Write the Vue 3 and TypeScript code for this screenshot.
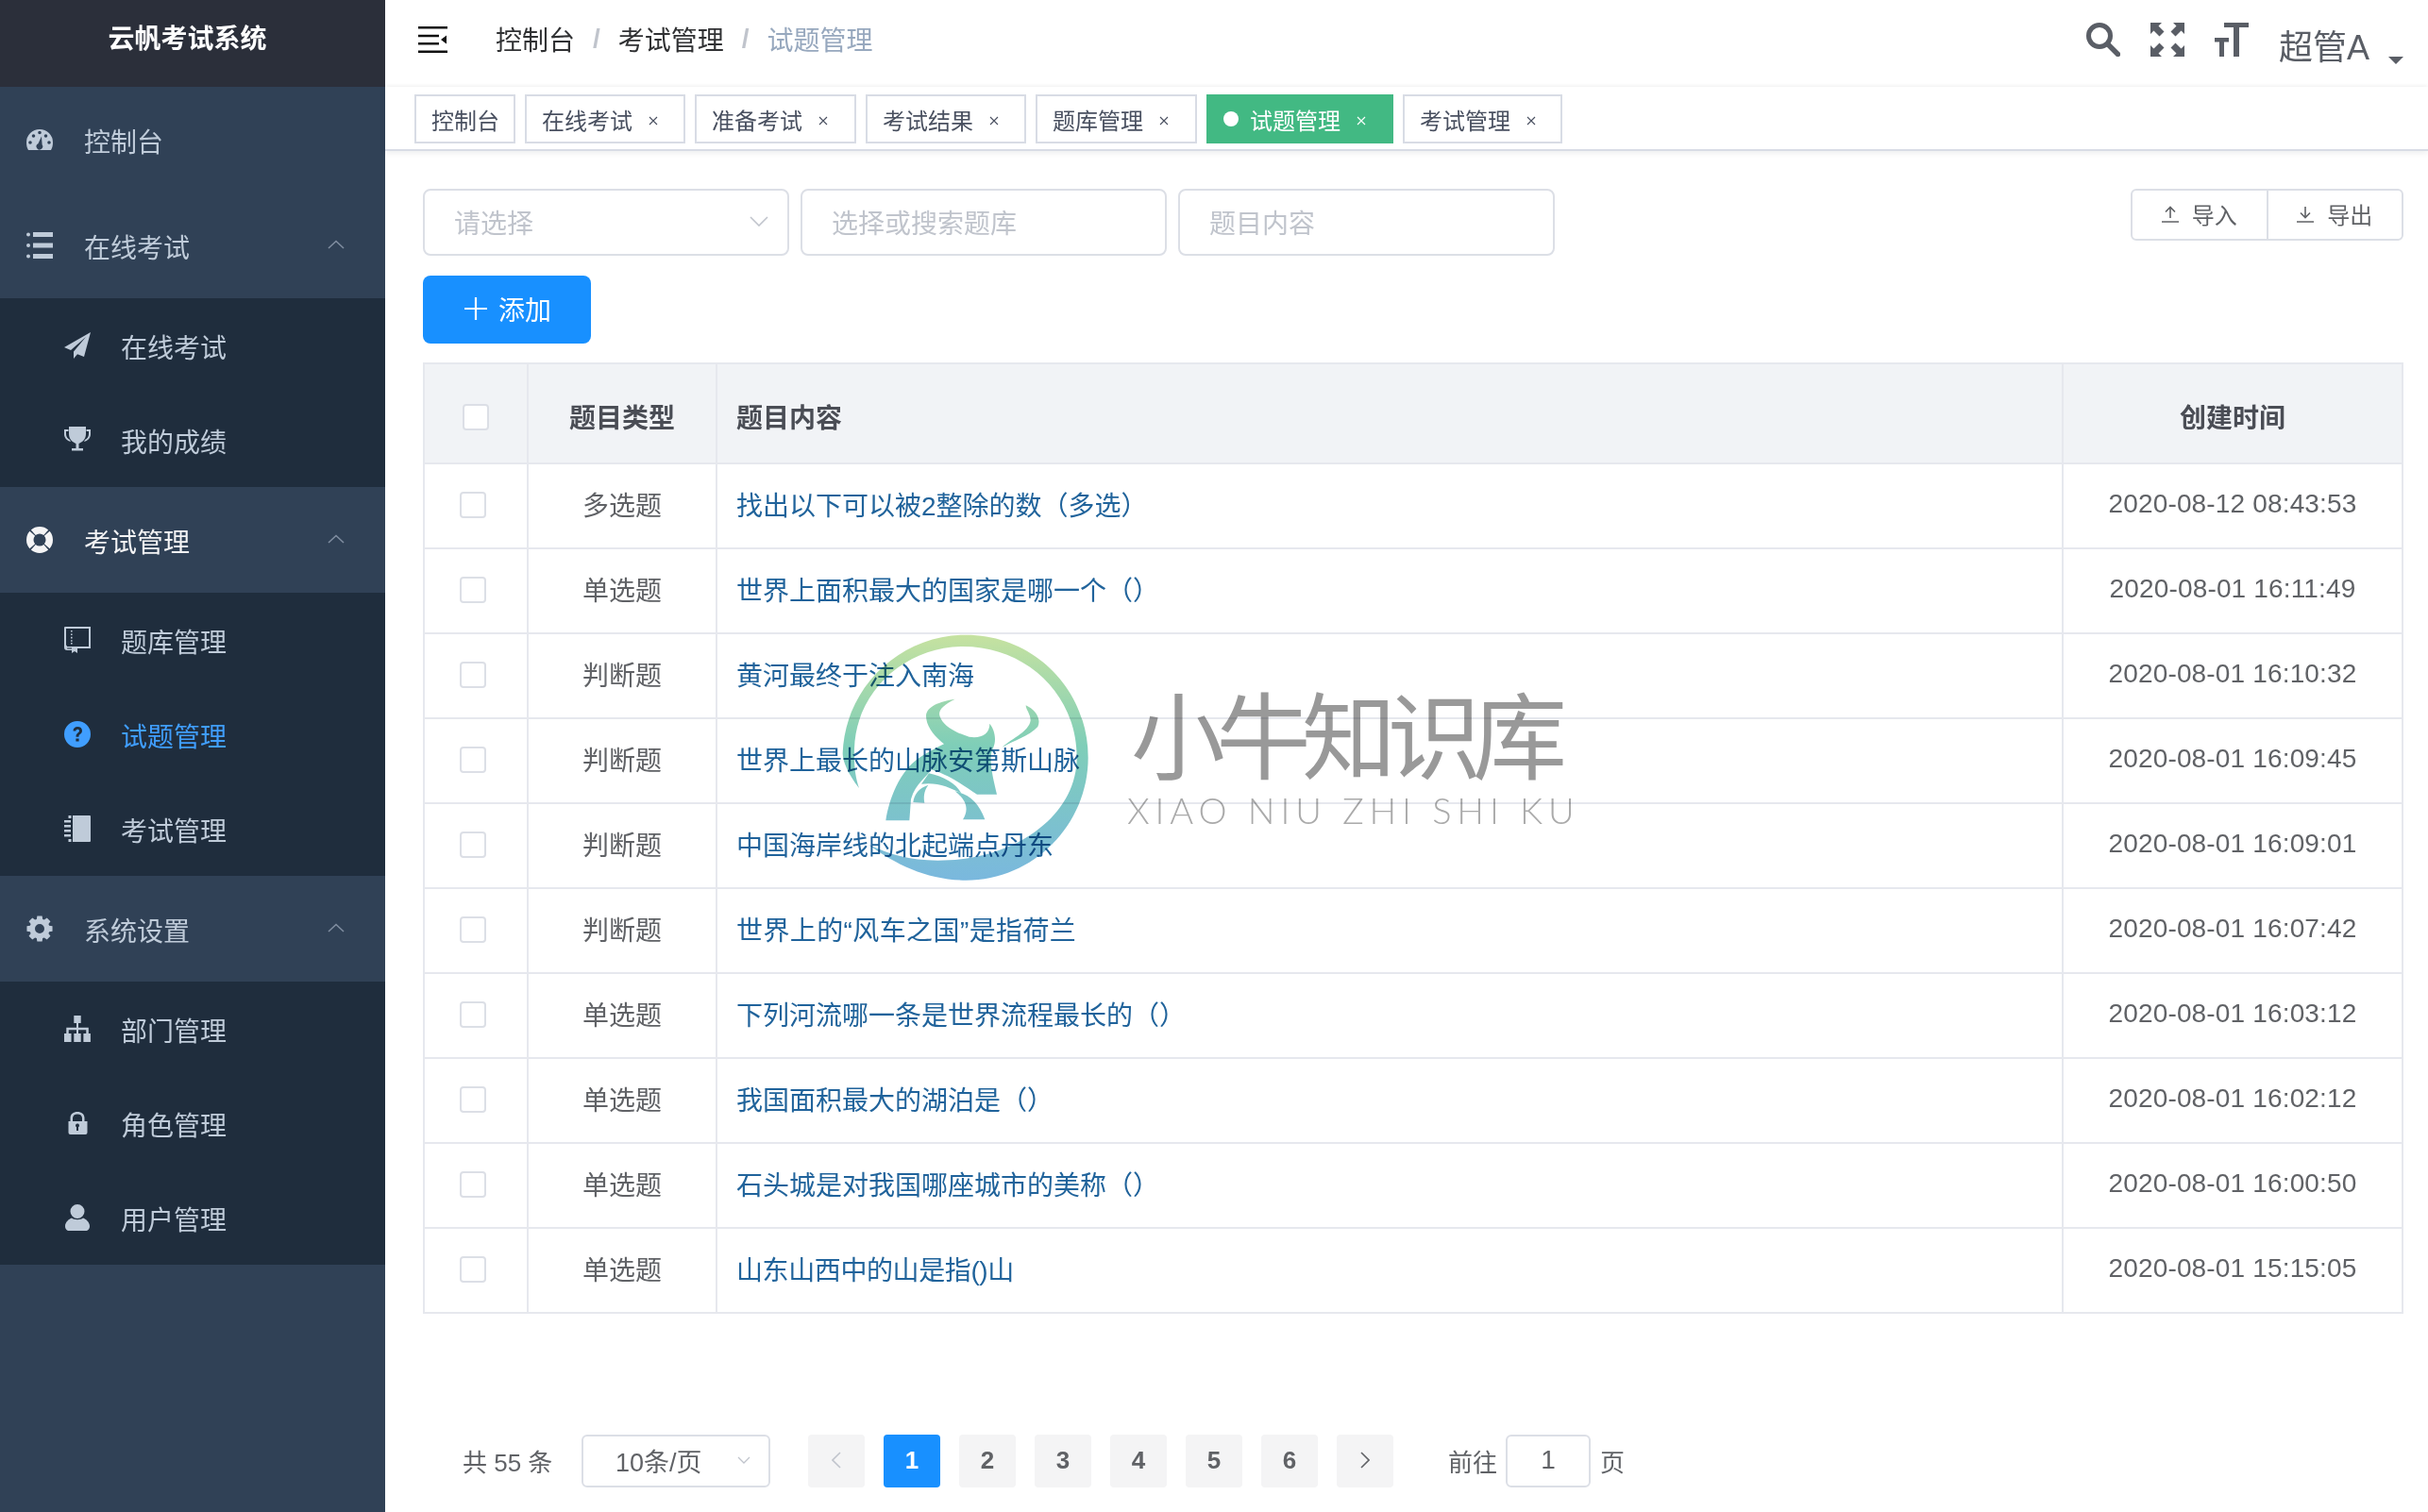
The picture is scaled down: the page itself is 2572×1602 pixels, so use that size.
<script setup lang="ts">
const circle = (cx: number, cy: number, r: number): string =>
  `M${cx - r} ${cy}a${r} ${r} 0 1 0 ${2 * r} 0a${r} ${r} 0 1 0 ${-2 * r} 0Z`

const ringSeg = (a0: number, a1: number, R: number, r: number): string => {
  const p = (rad: number, a: number) =>
    `${(14 + rad * Math.cos((a * Math.PI) / 180)).toFixed(2)} ${(14 + rad * Math.sin((a * Math.PI) / 180)).toFixed(2)}`
  return `M${p(R, a0)}A${R} ${R} 0 0 1 ${p(R, a1)}L${p(r, a1)}A${r} ${r} 0 0 0 ${p(r, a0)}Z`
}

const gear = (): string => {
  const pts: string[] = []
  const teeth = 8
  for (let i = 0; i < teeth; i++) {
    const c = (i * 360) / teeth - 90
    const step: [number, number][] = [
      [c - 22.5 + 5, 10.6],
      [c - 11, 13.8],
      [c + 11, 13.8],
      [c + 22.5 - 5, 10.6],
    ]
    for (const [a, r] of step) {
      pts.push(
        `${(14 + r * Math.cos((a * Math.PI) / 180)).toFixed(2)} ${(14 + r * Math.sin((a * Math.PI) / 180)).toFixed(2)}`,
      )
    }
  }
  return `M${pts.join('L')}Z${circle(14, 14, 5)}`
}

const icons: Record<string, string> = {
  dashboard:
    'M2 25C.7 23 0 20 0 17a14 14 0 0 1 28 0c0 3-.7 6-2 8Z' +
    circle(4, 17, 1.8) + circle(7.5, 10, 1.8) + circle(14, 6.5, 1.8) + circle(20.5, 10, 1.8) + circle(24, 17, 1.8) +
    'M16 10.5L12.4 18.2A3.3 3.3 0 1 0 16.6 19.3Z',
  list:
    'M7 0H28V5H7ZM7 11.5H28V16.5H7ZM7 23H28V28H7Z' + circle(2, 2.5, 2) + circle(2, 14, 2) + circle(2, 25.5, 2),
  plane: 'M28 0L0 16L7 19L23 5L10 20.5V28L14 23.2L21 26Z',
  trophy:
    'M5 0H23V8C23 14 18 17 15.5 18V23H20V25.5H8V23H12.5V18C10 17 5 14 5 8Z' +
    'M0 3H4.5V5H2V8C2 11 4 13 6 14L7 16C3 15 0 12 0 8Z' +
    'M28 3H23.5V5H26V8C26 11 24 13 22 14L21 16C25 15 28 12 28 8Z',
  buoy:
    ringSeg(-41, 41, 14, 6.5) + ringSeg(49, 131, 14, 6.5) + ringSeg(139, 221, 14, 6.5) + ringSeg(229, 311, 14, 6.5),
  book:
    'M1 0H28V23H14V28L11 26L8 28V25H3.2A3.2 3.2 0 0 1 0 21.8V1A1 1 0 0 1 1 0Z' +
    'M2 2V19.6A3.5 3.5 0 0 1 3.2 21H26V2Z' +
    'M7 4H8.6V5.6H7ZM7 7.4H8.6V9H7ZM7 10.8H8.6V12.4H7ZM7 14.2H8.6V15.8H7ZM7 17H8.6V18.6H7Z' +
    'M3.2 22.6H8V23.4H3.2Z',
  question:
    circle(14, 14, 14) +
    'M9.5 10.5C9.5 7.5 11.5 6 14.2 6C17 6 19 7.6 19 10.2C19 12.2 17.8 13.2 16.5 14.2C15.5 15 15.5 15.6 15.5 16.8H12.5C12.5 14.8 13 13.8 14.4 12.6C15.4 11.8 16 11.2 16 10.3C16 9.3 15.3 8.7 14.2 8.7C13 8.7 12.4 9.5 12.4 10.5Z' +
    'M12.4 18.4H15.6V21.6H12.4Z',
  notebook:
    'M9 0H27a1 1 0 0 1 1 1V27a1 1 0 0 1-1 1H9ZM4.5 0H7.5V3H4.5ZM4.5 25H7.5V28H4.5Z' +
    'M0 5H7V7.5H0ZM0 10H7V12.5H0ZM0 15H7V17.5H0ZM0 20H7V22.5H0Z',
  gear: gear(),
  sitemap:
    'M10.3 0H17.7V8H15V12.8H25.8V19H27.9V28H20.4V19H23.3V15.2H15V19H17.7V28H10.3V19H13V15.2H4.7V19H7.5V28H0V19H2.3V12.8H13V8H10.3Z',
  lock:
    'M6.5 12V8.5C6.5 4.3 9.8 2 14 2C18.2 2 21.5 4.3 21.5 8.5V12H24.5V24a2 2 0 0 1-2 2H6.5a2 2 0 0 1-2-2V12Z' +
    'M9 12H19V8.7C19 6 17 4.5 14 4.5C11 4.5 9 6 9 8.7Z' +
    'M12 16.5a2 2 0 1 1 3 1.7V22H13V18.2A2 2 0 0 1 12 16.5Z',
  user:
    circle(14, 7.5, 7.5) +
    'M1 23C1 19 5 15.5 8 14.5C10 16.8 18 16.8 20 14.5C23 15.5 27 19 27 23C27 26.5 25 28 23 28H5C3 28 1 26.5 1 23Z',
}

interface SubItem { label: string; icon: string; active?: boolean }
interface Group { label: string; icon: string; open?: boolean; current?: boolean; children: SubItem[] }

const menu: Group[] = [
  { label: '控制台', icon: 'dashboard', children: [] },
  {
    label: '在线考试', icon: 'list', open: true,
    children: [
      { label: '在线考试', icon: 'plane' },
      { label: '我的成绩', icon: 'trophy' },
    ],
  },
  {
    label: '考试管理', icon: 'buoy', open: true, current: true,
    children: [
      { label: '题库管理', icon: 'book' },
      { label: '试题管理', icon: 'question', active: true },
      { label: '考试管理', icon: 'notebook' },
    ],
  },
  {
    label: '系统设置', icon: 'gear', open: true,
    children: [
      { label: '部门管理', icon: 'sitemap' },
      { label: '角色管理', icon: 'lock' },
      { label: '用户管理', icon: 'user' },
    ],
  },
]

const tags = [
  { label: '控制台', close: false, active: false, width: 107 },
  { label: '在线考试', close: true, active: false, width: 170 },
  { label: '准备考试', close: true, active: false, width: 171 },
  { label: '考试结果', close: true, active: false, width: 170 },
  { label: '题库管理', close: true, active: false, width: 171 },
  { label: '试题管理', close: true, active: true, width: 198 },
  { label: '考试管理', close: true, active: false, width: 169 },
]

const rows = [
  ['多选题', '找出以下可以被2整除的数（多选）', '2020-08-12 08:43:53', ''],
  ['单选题', '世界上面积最大的国家是哪一个（）', '2020-08-01 16:11:49', ''],
  ['判断题', '黄河最终于注入南海', '2020-08-01 16:10:32', ''],
  ['判断题', '世界上最长的山脉安第斯山脉', '2020-08-01 16:09:45', ''],
  ['判断题', '中国海岸线的北起端点丹东', '2020-08-01 16:09:01', ''],
  ['判断题', '世界上的“风车之国”是指荷兰', '2020-08-01 16:07:42', 'wide'],
  ['单选题', '下列河流哪一条是世界流程最长的（）', '2020-08-01 16:03:12', ''],
  ['单选题', '我国面积最大的湖泊是（）', '2020-08-01 16:02:12', ''],
  ['单选题', '石头城是对我国哪座城市的美称（）', '2020-08-01 16:00:50', ''],
  ['单选题', '山东山西中的山是指()山', '2020-08-01 15:15:05', 'tight'],
]

const pages = [1, 2, 3, 4, 5, 6]
</script>

<template>
  <div class="app">
    <aside class="sidebar">
      <div class="logo">云帆考试系统</div>
      <template v-for="g in menu" :key="g.label + g.icon">
        <div class="menu-top" :class="{ current: g.current }">
          <svg class="ico" viewBox="0 0 28 28"><path :d="icons[g.icon]" fill="currentColor" fill-rule="evenodd" /></svg>
          <span class="menu-text">{{ g.label }}</span>
          <svg v-if="g.open" class="arrow" viewBox="0 0 18 10"><path d="M1 9L9 1.5L17 9" fill="none" stroke="currentColor" stroke-width="1.6" /></svg>
        </div>
        <div v-if="g.children.length" class="submenu">
          <div v-for="c in g.children" :key="c.label + c.icon" class="menu-sub" :class="{ active: c.active }">
            <svg class="ico" viewBox="0 0 28 28"><path :d="icons[c.icon]" fill="currentColor" fill-rule="evenodd" /></svg>
            <span class="menu-text">{{ c.label }}</span>
          </div>
        </div>
      </template>
    </aside>

    <main class="main">
      <header class="navbar">
        <svg class="toggle" viewBox="0 0 31 28">
          <path d="M0 0H31V2.4H0ZM0 8.8H22V11.2H0ZM0 17H22V19.4H0ZM0 25.6H31V28H0ZM24 14L30 9.5V18.5Z" fill="#111" />
        </svg>
        <nav class="crumbs">
          <span class="crumb">控制台</span><i class="sep">/</i>
          <span class="crumb">考试管理</span><i class="sep">/</i>
          <span class="crumb last">试题管理</span>
        </nav>
        <div class="nav-right">
          <svg class="nav-ico" viewBox="0 0 36 36">
            <circle cx="14" cy="14" r="11.5" fill="none" stroke="#5a5e66" stroke-width="5" />
            <path d="M23 23L33.5 33.5" stroke="#5a5e66" stroke-width="5.5" stroke-linecap="round" />
          </svg>
          <svg class="nav-ico" viewBox="0 0 36 36">
            <path fill="#5a5e66" d="M0 0H12L8.5 3.5L14.5 9.5L9.5 14.5L3.5 8.5L0 12ZM36 0H24L27.5 3.5L21.5 9.5L26.5 14.5L32.5 8.5L36 12ZM0 36V24L3.5 27.5L9.5 21.5L14.5 26.5L8.5 32.5L12 36ZM36 36H24L27.5 32.5L21.5 26.5L26.5 21.5L32.5 27.5L36 24Z" />
          </svg>
          <svg class="nav-ico" viewBox="0 0 36 36">
            <path fill="#5a5e66" d="M10 0H36V5H26V36H20V5H10ZM0 16H15V20.5H10V36H5V20.5H0Z" />
          </svg>
          <span class="user-name">超管A</span>
          <span class="caret"></span>
        </div>
      </header>

      <div class="tagbar">
        <div
          v-for="t in tags"
          :key="t.label + t.width"
          class="tag"
          :class="{ active: t.active }"
          :style="{ width: t.width + 'px' }"
        >
          <span v-if="t.active" class="tag-dot"></span>
          <span>{{ t.label }}</span>
          <svg v-if="t.close" class="tag-x" viewBox="0 0 10 10"><path d="M1 1L9 9M9 1L1 9" stroke="currentColor" stroke-width="1.1" /></svg>
        </div>
      </div>

      <section class="content">
        <div class="filters">
          <div class="field w-select">
            <span>请选择</span>
            <svg class="chev" viewBox="0 0 20 11"><path d="M1 1L10 10L19 1" fill="none" stroke="#c0c4cc" stroke-width="1.6" /></svg>
          </div>
          <div class="field w-bank"><span>选择或搜索题库</span></div>
          <div class="field w-text"><span>题目内容</span></div>
          <div class="io-group">
            <div class="io-btn">
              <svg class="io-ico" viewBox="0 0 18 18"><path d="M0 17H18M9 13V2M4 6.5L9 1.5L14 6.5" fill="none" stroke="#606266" stroke-width="1.6" /></svg>
              <span>导入</span>
            </div>
            <div class="io-btn">
              <svg class="io-ico" viewBox="0 0 18 18"><path d="M0 17H18M9 1V12M4 7.5L9 12.5L14 7.5" fill="none" stroke="#606266" stroke-width="1.6" /></svg>
              <span>导出</span>
            </div>
          </div>
        </div>

        <div class="add-btn">
          <svg class="plus" viewBox="0 0 24 24"><path d="M12 0V24M0 12H24" stroke="#fff" stroke-width="2.2" /></svg>
          <span>添加</span>
        </div>

        <table class="table">
          <colgroup>
            <col class="c1" /><col class="c2" /><col /><col class="c4" />
          </colgroup>
          <thead>
            <tr>
              <th><span class="check"></span></th>
              <th>题目类型</th>
              <th class="left">题目内容</th>
              <th>创建时间</th>
            </tr>
          </thead>
          <tbody>
            <tr v-for="r in rows" :key="r[2]">
              <td class="cb-cell"><span class="check"></span></td>
              <td>{{ r[0] }}</td>
              <td class="left link" :class="r[3]">{{ r[1] }}</td>
              <td class="date">{{ r[2] }}</td>
            </tr>
          </tbody>
        </table>

        <div class="pager">
          <span class="total">共 55 条</span>
          <div class="size-select">
            <span>10条/页</span>
            <svg class="size-chev" viewBox="0 0 14 8"><path d="M1 1L7 7L13 1" fill="none" stroke="#c0c4cc" stroke-width="1.3" /></svg>
          </div>
          <div class="pg-btns">
            <div class="pg">
              <svg class="pg-arrow" viewBox="0 0 10 18"><path d="M9 1L1 9L9 17" fill="none" stroke="#c0c4cc" stroke-width="1.6" /></svg>
            </div>
            <div v-for="p in pages" :key="p" class="pg" :class="{ on: p === 1 }">{{ p }}</div>
            <div class="pg">
              <svg class="pg-arrow" viewBox="0 0 10 18"><path d="M1 1L9 9L1 17" fill="none" stroke="#606266" stroke-width="1.6" /></svg>
            </div>
          </div>
          <span class="goto">前往</span>
          <div class="goto-input">1</div>
          <span class="goto-end">页</span>
        </div>
      </section>
    </main>

    <div class="watermark">
      <svg class="wm-logo" viewBox="0 0 900 870">
        <defs>
          <linearGradient id="wmg" gradientUnits="userSpaceOnUse" x1="0" y1="38" x2="0" y2="818">
            <stop offset="0" stop-color="#c6e2a0" />
            <stop offset="0.45" stop-color="#7fceb8" />
            <stop offset="1" stop-color="#7ab8de" />
          </linearGradient>
        </defs>
        <path fill="url(#wmg)" d="M120 525C85 480 68 440 68 415C75 205 250 38 460 38C675 38 848 210 848 428C848 640 675 818 460 818C340 818 240 770 150 705C215 735 280 755 370 755C620 755 812 610 812 428C812 225 650 75 450 75C270 75 110 215 105 400C103 450 108 490 120 525Z" />
        <path fill="url(#wmg)" d="M425 242C385 262 368 280 378 300C390 330 430 350 470 362C505 368 535 355 535 320C552 340 558 375 545 400C530 430 545 490 558 545L495 545C455 520 420 490 350 466C335 490 300 510 285 560L280 628L205 628C215 560 250 470 310 430C340 410 370 395 390 385C360 360 333 330 333 295C335 265 375 250 425 242Z" />
        <path fill="url(#wmg)" d="M292 570C295 545 310 525 340 515C325 535 325 555 328 572Z" />
        <path fill="url(#wmg)" d="M342 478C390 488 430 512 445 542C410 522 365 505 318 512Z" />
        <path fill="url(#wmg)" d="M425 535C470 545 500 570 520 625L450 625C465 600 470 570 425 535Z" />
        <path fill="url(#wmg)" d="M650 262C680 275 700 305 688 330C660 360 610 375 575 395C610 365 660 345 665 310C665 290 650 275 650 262Z" />
      </svg>
      <div class="wm-text">
        <div class="wm-cn">小牛知识库</div>
        <div class="wm-en">XIAO NIU ZHI SHI KU</div>
      </div>
    </div>
  </div>
</template>

<style>
html, body { margin: 0; background: #fff; }
</style>

<style scoped>
.app {
  position: relative;
  display: flex;
  width: 2572px;
  height: 1602px;
  overflow: hidden;
  font-family: "Liberation Sans", "Noto Sans CJK SC", sans-serif;
  color: #606266;
  background: #fff;
}
.sidebar {
  flex: 0 0 408px;
  background: #304156;
  color: #bfcbd9;
  font-size: 28px;
}
.logo {
  height: 92px;
  box-sizing: border-box;
  padding-bottom: 15px;
  background: #2b2f3a;
  color: #fff;
  font-size: 28px;
  font-weight: 700;
  display: flex;
  align-items: center;
  justify-content: center;
  padding-right: 11px;
}
.menu-top {
  height: 112px;
  padding-left: 28px;
  display: flex;
  align-items: center;
  position: relative;
}
.menu-top.current { color: #f4f4f5; }
.submenu { background: #1f2d3d; }
.menu-sub {
  height: 100px;
  padding-left: 68px;
  display: flex;
  align-items: center;
}
.menu-sub.active { color: #409eff; }
.ico { width: 28px; height: 28px; flex: none; margin-right: 33px; }
.menu-sub .ico { margin-right: 32px; }
.menu-text { position: relative; top: 4px; line-height: 1; }
.arrow {
  position: absolute;
  left: 347px;
  top: 50px;
  width: 18px;
  height: 10px;
  color: #7f8da0;
}
.main { flex: 1; min-width: 0; display: flex; flex-direction: column; }
.navbar {
  height: 92px;
  flex: none;
  display: flex;
  align-items: center;
  position: relative;
}
.toggle { width: 31px; height: 28px; margin-left: 35px; margin-top: -8px; }
.crumbs {
  margin-left: 51px;
  font-size: 28px;
  display: flex;
  align-items: center;
  margin-top: -10px;
  color: #303133;
}
.sep { font-style: normal; color: #c0c4cc; margin: 0 19px; font-weight: 700; }
.crumb.last { color: #97a8be; }
.nav-right {
  margin-left: auto;
  display: flex;
  align-items: flex-start;
  height: 92px;
  padding-right: 26px;
  position: relative;
}
.nav-ico { width: 36px; height: 36px; margin-top: 24px; margin-right: 32px; }
.user-name { font-size: 36px; color: #5a5e66; margin-top: 31px; line-height: 40px; }
.caret {
  width: 0;
  height: 0;
  margin-top: 60px;
  margin-left: 20px;
  border-left: 8px solid transparent;
  border-right: 8px solid transparent;
  border-top: 8px solid #5a5e66;
}
.tagbar {
  height: 68px;
  flex: none;
  box-sizing: border-box;
  padding: 8px 0 0 31px;
  display: flex;
  gap: 10px;
  background: #fff;
  border-bottom: 2px solid #d8dce5;
  box-shadow: 0 2px 6px rgba(0, 21, 41, 0.08), 0 -2px 4px rgba(0, 21, 41, 0.03);
  position: relative;
}
.tag {
  height: 52px;
  box-sizing: border-box;
  border: 2px solid #d8dce5;
  font-size: 24px;
  color: #495060;
  display: flex;
  align-items: center;
  padding-left: 16px;
  background: #fff;
}
.tag.active {
  background: #42b983;
  border-color: #42b983;
  color: #fff;
  padding-left: 16px;
}
.tag-dot {
  width: 16px;
  height: 16px;
  background: #fff;
  border-radius: 50%;
  margin-right: 12px;
}
.tag-x { width: 10px; height: 10px; margin-left: 17px; margin-top: 3px; }
.content { flex: 1; padding: 40px 26px 0 40px; min-height: 0; }
.filters { display: flex; align-items: flex-start; gap: 12px; }
.field {
  height: 71px;
  box-sizing: border-box;
  border: 2px solid #dcdfe6;
  border-radius: 8px;
  font-size: 28px;
  color: #c0c4cc;
  display: flex;
  align-items: center;
  justify-content: space-between;
  padding: 0 20px 2px 31px;
}
.w-select { width: 388px; }
.w-bank { width: 388px; }
.w-text { width: 399px; }
.chev { width: 20px; height: 11px; }
.io-group {
  margin-left: auto;
  display: flex;
  width: 289px;
  height: 55px;
  box-sizing: border-box;
  border: 2px solid #dcdfe6;
  border-radius: 6px;
}
.io-btn {
  flex: 1;
  display: flex;
  align-items: center;
  justify-content: center;
  font-size: 24px;
  color: #606266;
  gap: 14px;
  padding-bottom: 2px;
}
.io-btn + .io-btn { border-left: 2px solid #dcdfe6; }
.io-ico { width: 18px; height: 18px; }
.add-btn {
  margin-top: 21px;
  width: 178px;
  height: 72px;
  box-sizing: border-box;
  padding: 0 0 2px 2px;
  border-radius: 8px;
  background: #1890ff;
  color: #fff;
  font-size: 28px;
  display: flex;
  align-items: center;
  justify-content: center;
  gap: 12px;
}
.plus { width: 24px; height: 24px; }
.table {
  margin-top: 20px;
  width: 2098px;
  table-layout: fixed;
  border-collapse: separate;
  border-spacing: 0;
  border-top: 2px solid #e6e8ee;
  border-left: 2px solid #e6e8ee;
  font-size: 28px;
  color: #606266;
}
.c1 { width: 110px; }
.c2 { width: 200px; }
.c4 { width: 360px; }
.table th, .table td {
  padding: 0;
  text-align: center;
  border-right: 2px solid #e6e8ee;
  border-bottom: 2px solid #e6e8ee;
  box-sizing: border-box;
}
.table th {
  height: 106px;
  padding-top: 5px;
  background: #f1f3f6;
  font-weight: 700;
  color: #4a4d55;
}
.table td { height: 90px; padding-bottom: 5px; }
.table .left { text-align: left; padding-left: 20px; }
.table .link { color: #20639b; }
.table .wide { letter-spacing: 0.4px; }
.table .tight { letter-spacing: -0.4px; }
.table .date { letter-spacing: 0.16px; }
.check {
  display: inline-block;
  vertical-align: middle;
  width: 28px;
  height: 28px;
  box-sizing: border-box;
  border: 2px solid #dcdfe6;
  border-radius: 4px;
  background: #fff;
}
.cb-cell .check { position: relative; left: -3px; }
.pager {
  margin-top: 128px;
  padding-left: 42px;
  display: flex;
  align-items: center;
  height: 56px;
  font-size: 26px;
  color: #606266;
}
.total { width: 93px; white-space: nowrap; padding-bottom: 2px; }
.size-select {
  margin-left: 33px;
  width: 200px;
  height: 56px;
  box-sizing: border-box;
  border: 2px solid #dcdfe6;
  border-radius: 6px;
  font-size: 27px;
  display: flex;
  align-items: center;
  justify-content: space-between;
  padding: 0 19px 2px 34px;
}
.size-chev { width: 14px; height: 8px; }
.pg-btns { display: flex; gap: 20px; margin-left: 40px; }
.pg {
  width: 60px;
  height: 56px;
  box-sizing: border-box;
  padding-bottom: 2px;
  background: #f4f4f5;
  border-radius: 4px;
  font-size: 26px;
  font-weight: 700;
  color: #606266;
  display: flex;
  align-items: center;
  justify-content: center;
}
.pg.on { background: #1890ff; color: #fff; }
.pg-arrow { width: 10px; height: 18px; }
.goto { margin-left: 58px; padding-bottom: 2px; }
.goto-input {
  margin-left: 9px;
  width: 90px;
  height: 56px;
  box-sizing: border-box;
  padding-bottom: 2px;
  border: 2px solid #dcdfe6;
  border-radius: 6px;
  font-size: 28px;
  display: flex;
  align-items: center;
  justify-content: center;
}
.goto-end { margin-left: 10px; padding-bottom: 2px; }
.watermark {
  position: absolute;
  left: 870px;
  top: 660px;
  display: flex;
  mix-blend-mode: multiply;
  pointer-events: none;
}
.wm-logo { width: 300px; height: 290px; flex: none; }
.wm-text { margin-left: 24px; margin-top: 55px; font-family: "Noto Sans CJK SC", sans-serif; }
.wm-cn {
  font-size: 100px;
  line-height: 120px;
  letter-spacing: -9.5px;
  margin-left: 4px;
  color: #999;
  font-weight: 400;
  white-space: nowrap;
}
.wm-en {
  font-family: Lato, sans-serif;
  font-weight: 300;
  font-size: 38px;
  line-height: 46px;
  letter-spacing: 5.9px;
  color: #aaa;
  white-space: nowrap;
}
</style>
